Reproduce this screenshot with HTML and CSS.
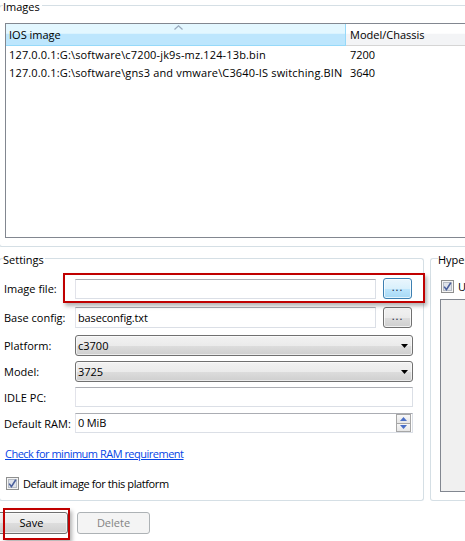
FILE: index.html
```html
<!DOCTYPE html>
<html>
<head>
<meta charset="utf-8">
<link rel="stylesheet" href="styles.css">
</head>
<body>
<div class="page">
  <section class="group images">
    <div class="group-head"><span class="gh-left"></span><span class="gh-title">Images</span><span class="gh-line"></span></div>
    <div class="group-body images-body">
      <div class="list">
        <div class="list-head">
          <div class="col col1"><svg class="sort-arrow" width="9" height="5" viewBox="0 0 9 5"><path d="M0.5 4.5 L4.5 0.8 L8.5 4.5" fill="none" stroke="#98a9bd" stroke-width="1.2"/></svg>IOS image</div>
          <div class="col col2">Model/Chassis</div>
        </div>
        <div class="lrow"><span class="c1">127.0.0.1:G:\software\c7200-jk9s-mz.124-13b.bin</span><span class="c2">7200</span></div>
        <div class="lrow"><span class="c1">127.0.0.1:G:\software\gns3 and vmware\C3640-IS switching.BIN</span><span class="c2">3640</span></div>
      </div>
    </div>
  </section>

  <div class="lower">
    <section class="group settings">
      <div class="group-head"><span class="gh-left"></span><span class="gh-title">Settings</span><span class="gh-line"></span></div>
      <div class="group-body settings-body">
        <div class="frow r-image">
          <span class="flabel">Image file:</span>
          <span class="textbox short"></span>
          <span class="browse hover">...</span>
        </div>
        <div class="frow r-base">
          <span class="flabel">Base config:</span>
          <span class="textbox short">baseconfig.txt</span>
          <span class="browse">...</span>
        </div>
        <div class="frow r-platform">
          <span class="flabel">Platform:</span>
          <span class="combo"><span class="combo-text">c3700</span><svg class="combo-arrow" width="7" height="4" viewBox="0 0 7 4"><path d="M0 0 H7 L3.5 4 Z" fill="#000"/></svg></span>
        </div>
        <div class="frow r-model">
          <span class="flabel">Model:</span>
          <span class="combo"><span class="combo-text">3725</span><svg class="combo-arrow" width="7" height="4" viewBox="0 0 7 4"><path d="M0 0 H7 L3.5 4 Z" fill="#000"/></svg></span>
        </div>
        <div class="frow r-idle">
          <span class="flabel">IDLE PC:</span>
          <span class="textbox long"></span>
        </div>
        <div class="frow r-ram">
          <span class="flabel">Default RAM:</span>
          <span class="textbox long spin"><span class="spin-text">0 MiB</span>
            <span class="spin-btns">
              <span class="spin-btn"><svg width="7" height="4" viewBox="0 0 7 4"><path d="M0 4 H7 L3.5 0 Z" fill="#4a6fc7"/></svg></span>
              <span class="spin-btn"><svg width="7" height="4" viewBox="0 0 7 4"><path d="M0 0 H7 L3.5 4 Z" fill="#4a6fc7"/></svg></span>
            </span>
          </span>
        </div>
        <div class="link-row"><a class="link" href="#">Check for minimum RAM requirement</a></div>
        <div class="check-row">
          <svg class="checkbox" width="13" height="13" viewBox="0 0 13 13"><rect x="0.5" y="0.5" width="12" height="12" fill="#f4f4f4" stroke="#8e8f8f"/><rect x="2.5" y="2.5" width="8" height="8" fill="#dfe3ea" stroke="#b7bcc5"/><path d="M3.2 6.6 L5.4 9.6 L9.8 2.8" fill="none" stroke="#4a5f9c" stroke-width="1.6"/></svg>
          <span class="check-text">Default image for this platform</span>
        </div>
      </div>
    </section>
    <section class="group hyper">
      <div class="group-head"><span class="gh-left"></span><span class="gh-title">Hypervisors</span><span class="gh-line"></span></div>
      <div class="group-body hyper-body">
        <div class="hcheck">
          <svg class="checkbox" width="13" height="13" viewBox="0 0 13 13"><rect x="0.5" y="0.5" width="12" height="12" fill="#f4f4f4" stroke="#8e8f8f"/><rect x="2.5" y="2.5" width="8" height="8" fill="#dfe3ea" stroke="#b7bcc5"/><path d="M3.2 6.6 L5.4 9.6 L9.8 2.8" fill="none" stroke="#4a5f9c" stroke-width="1.6"/></svg>
          <span>Use the hypervisor manager</span>
        </div>
        <div class="hlist"></div>
      </div>
    </section>
  </div>

  <div class="buttons">
    <span class="btn save">Save</span>
    <span class="btn delete">Delete</span>
  </div>

  <div class="mark mark-image"></div>
  <div class="mark mark-save"></div>
</div>
</body>
</html>
```

FILE: styles.css
```css
html, body {
  margin: 0;
  padding: 0;
  overflow: hidden;
  background: #ffffff;
}

.page {
  position: relative;
  width: 465px;
  height: 541px;
  overflow: hidden;
  font-family: "Open Sans", "Noto Sans", "Liberation Sans", sans-serif;
  font-size: 11px;
  color: #000;
}

/* group boxes */
.group {
  margin-left: -1px;
}
.group-head {
  display: flex;
  height: 16px;
}
.gh-left {
  width: 4px;
  margin-top: 5px;
  border-top: 1px solid #d5dfe5;
  border-left: 1px solid #d5dfe5;
  border-top-left-radius: 3px;
  box-sizing: border-box;
}
.gh-title {
  line-height: 14px;
  padding-right: 2px;
  white-space: nowrap;
}
.gh-line {
  flex: 1;
  margin-top: 5px;
  border-top: 1px solid #d5dfe5;
  border-right: 1px solid #d5dfe5;
  border-top-right-radius: 3px;
}
.group-body {
  border: 1px solid #d5dfe5;
  border-top: none;
  border-bottom-left-radius: 3px;
  border-bottom-right-radius: 3px;
}

/* images */
.images {
  width: 500px;
}
.images-body {
  padding: 7px 0 8px 5px;
}
.list {
  height: 215px;
  box-sizing: border-box;
  border: 1px solid #828790;
  background: #fff;
}
.list-head {
  display: flex;
  height: 22px;
}
.col {
  box-sizing: border-box;
  height: 22px;
  line-height: 21px;
  padding-left: 3px;
  white-space: nowrap;
}
.col1 {
  position: relative;
  width: 340px;
  background: linear-gradient(#e3f7ff 0%, #e3f7ff 45%, #bde6fd 46%, #bde6fd 100%);
  border-bottom: 1px solid #96d9f9;
  border-right: 1px solid #96d9f9;
}
.sort-arrow {
  position: absolute;
  left: 168px;
  top: 1px;
}
.col2 {
  flex: 1;
  padding-left: 4px;
  background: linear-gradient(#ffffff 0%, #ffffff 45%, #f3f4f6 46%, #f3f4f6 100%);
  border-bottom: 1px solid #d5d5d5;
}
.lrow {
  display: flex;
  height: 18px;
  line-height: 18px;
  white-space: nowrap;
}
.lrow .c1 {
  width: 341px;
  padding-left: 3px;
  box-sizing: border-box;
  overflow: hidden;
  letter-spacing: 0.15px;
}
.lrow .c2 {
  padding-left: 3px;
}

/* lower area */
.lower {
  display: flex;
  margin-top: 6px;
}
.settings {
  width: 425px;
  flex: none;
  display: flex;
  flex-direction: column;
}
.settings .gh-title {
  padding-right: 1px;
}
.settings-body {
  flex: 1;
  padding: 9px 0 9px 4px;
  display: flex;
  flex-direction: column;
}
.hyper {
  margin-left: 6px;
  width: 100px;
  flex: none;
  display: flex;
  flex-direction: column;
}
.hyper .gh-left {
  width: 8px;
}
.hyper-body {
  flex: 1;
  padding: 11px 0 8px 10px;
}
.hcheck {
  display: flex;
  align-items: center;
  height: 13px;
  gap: 4px;
  white-space: nowrap;
}
.hlist {
  margin-top: 6px;
  margin-left: -1px;
  height: 193px;
  box-sizing: border-box;
  border: 1px solid #828790;
  background: #f0f0f0;
}

/* form rows */
.frow {
  display: flex;
  align-items: flex-end;
  height: 21px;
}
.r-base { margin-top: 8px; }
.r-platform { margin-top: 7px; }
.r-model { margin-top: 5px; }
.r-idle { margin-top: 5px; height: 20px; }
.r-ram { margin-top: 6px; height: 20px; }

.flabel {
  width: 71px;
  flex: none;
  align-self: center;
  white-space: nowrap;
}
.textbox {
  box-sizing: border-box;
  height: 20px;
  border: 1px solid #dbdfe6;
  border-top-color: #abadb3;
  border-left-color: #e2e3ea;
  background: #fff;
  line-height: 18px;
  padding-left: 2px;
  display: flex;
  align-items: center;
  letter-spacing: -0.15px;
}
.textbox.short {
  width: 301px;
}
.textbox.long {
  width: 338px;
}
.r-base .textbox.short {
  height: 21px;
}
.browse {
  box-sizing: border-box;
  width: 29px;
  height: 21px;
  margin-left: 7px;
  border: 1px solid #707070;
  border-radius: 3px;
  background: linear-gradient(#f2f2f2 0%, #ebebeb 50%, #dddddd 51%, #cfcfcf 100%);
  text-align: center;
  line-height: 16px;
  font-size: 11px;
  letter-spacing: 1px;
  color: #1a1a40;
  box-shadow: inset 0 0 0 1px rgba(255,255,255,0.7);
}
.browse.hover {
  border-color: #3c7fb1;
  background: linear-gradient(#eaf6fd 0%, #d9f0fc 50%, #bee6fd 51%, #a7d9f5 100%);
}
.combo {
  box-sizing: border-box;
  width: 338px;
  height: 21px;
  border: 1px solid #707070;
  border-radius: 3px;
  background: linear-gradient(#f2f2f2 0%, #ebebeb 50%, #dddddd 51%, #cfcfcf 100%);
  box-shadow: inset 0 0 0 1px rgba(255,255,255,0.6);
  display: flex;
  align-items: center;
  padding-left: 2px;
  padding-right: 4px;
}
.combo-text {
  flex: 1;
}
.spin {
  padding-right: 1px;
}
.spin-text {
  flex: 1;
}
.spin-btns {
  display: flex;
  flex-direction: column;
  width: 15px;
  height: 18px;
}
.spin-btn {
  box-sizing: border-box;
  flex: 1;
  border: 1px solid #a6a6a6;
  background: linear-gradient(#f7f7f7, #e6e6e6);
  display: flex;
  align-items: center;
  justify-content: center;
}
.spin-btn + .spin-btn {
  border-top: none;
}

.link-row {
  margin-top: 13px;
  height: 15px;
  line-height: 15px;
  padding-left: 1px;
}
.link {
  color: #0645e6;
  text-decoration: underline;
  letter-spacing: -0.5px;
}
.check-row {
  margin-top: 15px;
  height: 15px;
  display: flex;
  align-items: center;
  gap: 4px;
  padding-left: 2px;
  white-space: nowrap;
}
.check-text {
  letter-spacing: -0.4px;
}
.checkbox {
  flex: none;
}

/* buttons */
.buttons {
  display: flex;
  gap: 9px;
  margin-top: 11px;
  margin-left: -5px;
}
.btn {
  box-sizing: border-box;
  width: 73px;
  height: 22px;
  border-radius: 3px;
  text-align: center;
  line-height: 20px;
}
.save {
  border: 1px solid #707070;
  background: linear-gradient(#f2f2f2 0%, #ebebeb 50%, #dddddd 51%, #cfcfcf 100%);
  box-shadow: inset 0 0 0 1px rgba(255,255,255,0.6);
}
.delete {
  border: 1px solid #adb2b5;
  background: #f4f4f4;
  color: #838383;
}

/* red annotation frames lying over the form */
.mark {
  position: absolute;
  box-sizing: border-box;
  border: 2px solid #c00000;
  box-shadow: 2px 3px 4px rgba(0,0,0,0.3);
}
.mark-image {
  left: 63px;
  top: 273px;
  width: 362px;
  height: 30px;
}
.mark-save {
  left: 3px;
  top: 508px;
  width: 67px;
  height: 32px;
}
```
